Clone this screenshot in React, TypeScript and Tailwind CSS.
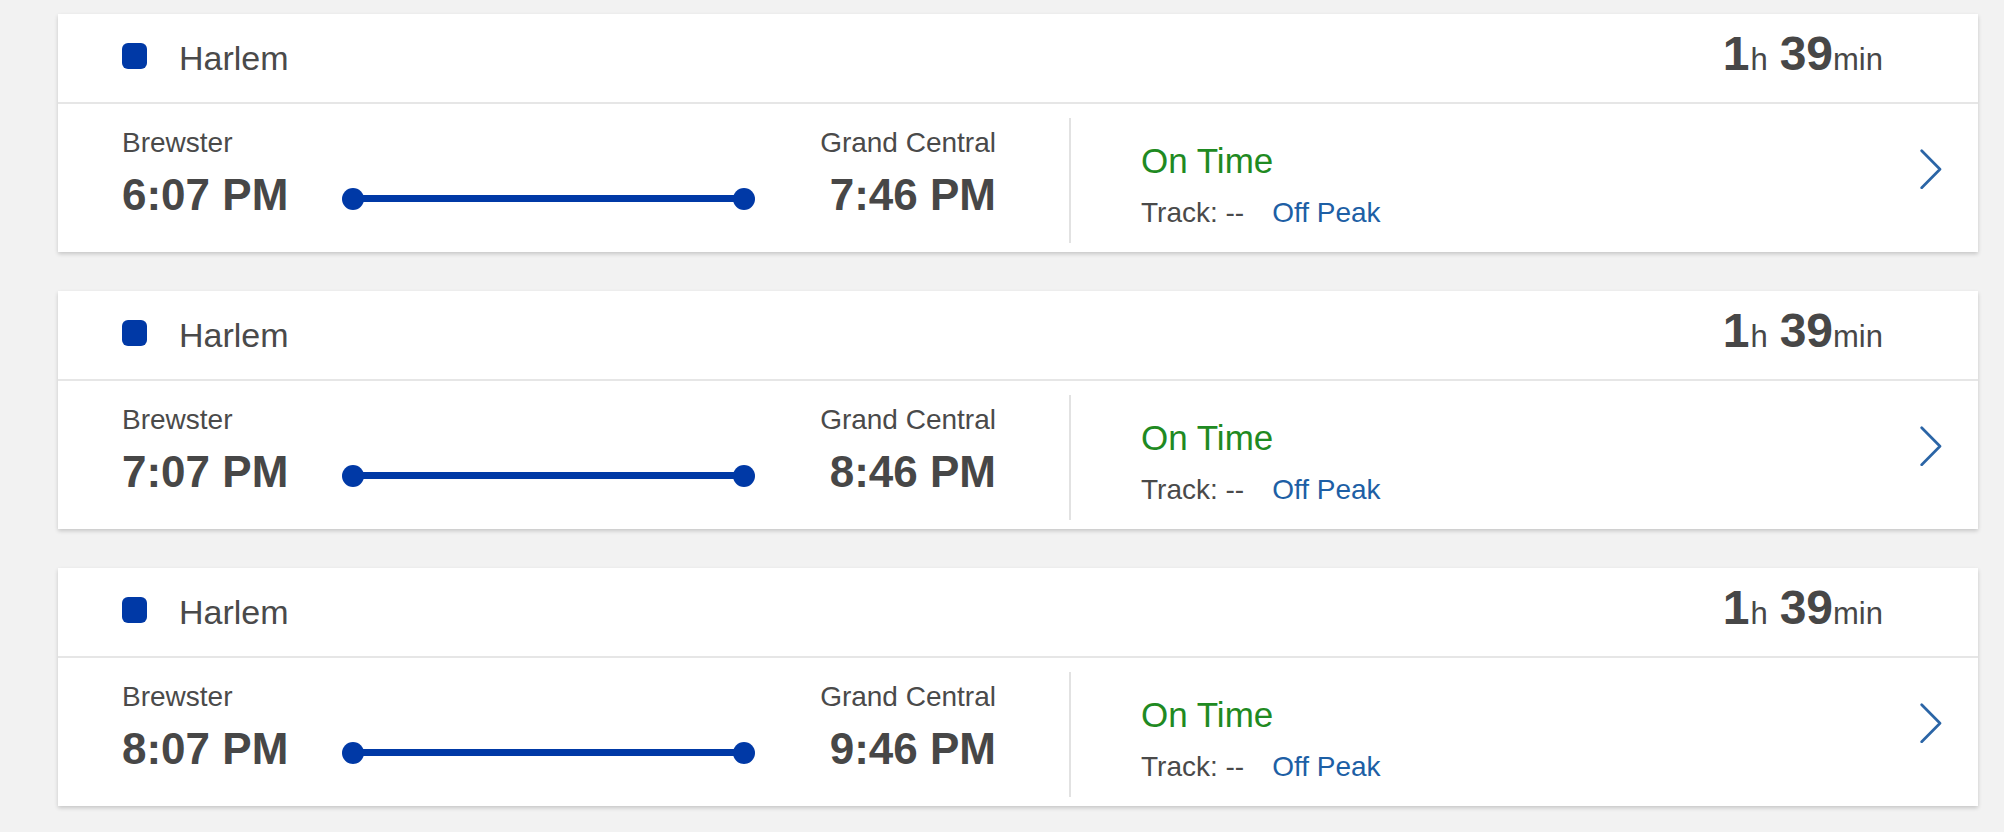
import React from 'react';

interface Trip {
  line: string;
  from: string;
  to: string;
  depart: string;
  arrive: string;
  hours: string;
  minutes: string;
  status: string;
  track: string;
  fare: string;
}

const trips: Trip[] = [
  { line: 'Harlem', from: 'Brewster', to: 'Grand Central', depart: '6:07 PM', arrive: '7:46 PM', hours: '1', minutes: '39', status: 'On Time', track: '--', fare: 'Off Peak' },
  { line: 'Harlem', from: 'Brewster', to: 'Grand Central', depart: '7:07 PM', arrive: '8:46 PM', hours: '1', minutes: '39', status: 'On Time', track: '--', fare: 'Off Peak' },
  { line: 'Harlem', from: 'Brewster', to: 'Grand Central', depart: '8:07 PM', arrive: '9:46 PM', hours: '1', minutes: '39', status: 'On Time', track: '--', fare: 'Off Peak' },
];

const TripCard: React.FC<{ trip: Trip }> = ({ trip }) => (
  <div className="bg-white shadow-[0_2px_4px_rgba(0,0,0,0.18)] h-[238px]">
    {/* header */}
    <div className="h-[90px] border-b-2 border-[#e6e6e6] flex items-center justify-between pl-[64px] pr-[95px]">
      <div className="flex items-center">
        <div className="w-[25px] h-[26px] rounded-[6px] bg-[#0039a6] mb-1" />
        <span className="ml-[32px] text-[34px] leading-[40px] text-[#4a4a4a]">{trip.line}</span>
      </div>
      <div className="flex items-baseline leading-none text-[#474747] mb-[9px]">
        <span className="text-[48px] font-bold">{trip.hours}</span>
        <span className="text-[31px] ml-[1px]">h</span>
        <span className="text-[48px] font-bold ml-[12px]">{trip.minutes}</span>
        <span className="text-[31px]">min</span>
      </div>
    </div>

    {/* body */}
    <div className="h-[148px] flex pt-[14px] pb-[9px] pl-[64px] pr-[36px]">
      <div className="w-[947px] pt-[9px]">
        <div className="w-[874px] flex justify-between text-[28px] leading-[32px] text-[#4a4a4a]">
          <span>{trip.from}</span>
          <span>{trip.to}</span>
        </div>
        <div className="w-[874px] flex items-center mt-[14px] text-[44px] leading-[44px] font-bold text-[#474747]">
          <span className="w-[220px]">{trip.depart}</span>
          <div className="w-[413px] flex items-center pt-[7px]">
            <div className="w-[22px] h-[22px] rounded-full bg-[#0039a6]" />
            <div className="flex-1 h-[7px] bg-[#0039a6] -mx-[2px]" />
            <div className="w-[22px] h-[22px] rounded-full bg-[#0039a6]" />
          </div>
          <span className="w-[241px] text-right">{trip.arrive}</span>
        </div>
      </div>
      <div className="flex-1 border-l-2 border-[#e2e2e2] pl-[70px] flex justify-between">
        <div className="pt-[23px]">
          <div className="text-[35px] leading-[40px] text-[#1f8a22]">{trip.status}</div>
          <div className="mt-[16px] text-[28px] leading-[32px] flex">
            <span className="text-[#4a4a4a]">Track: {trip.track}</span>
            <span className="ml-[28px] text-[#1d5fa5]">{trip.fare}</span>
          </div>
        </div>
        <svg className="mt-[31px]" width="22" height="40" viewBox="0 0 22 40" fill="none">
          <polyline points="1.7,1.7 20,20.3 1.7,38.7" stroke="#2b65a6" strokeWidth="2.7" strokeLinecap="round" strokeLinejoin="round" />
        </svg>
      </div>
    </div>
  </div>
);

export default function App() {
  return (
    <div className="min-h-[832px] bg-[#f2f2f2] pt-[14px] pl-[58px] pr-[26px] flex flex-col gap-[39px] font-['Liberation_Sans',Arial,sans-serif]">
      {trips.map((t, i) => (
        <TripCard key={i} trip={t} />
      ))}
    </div>
  );
}
